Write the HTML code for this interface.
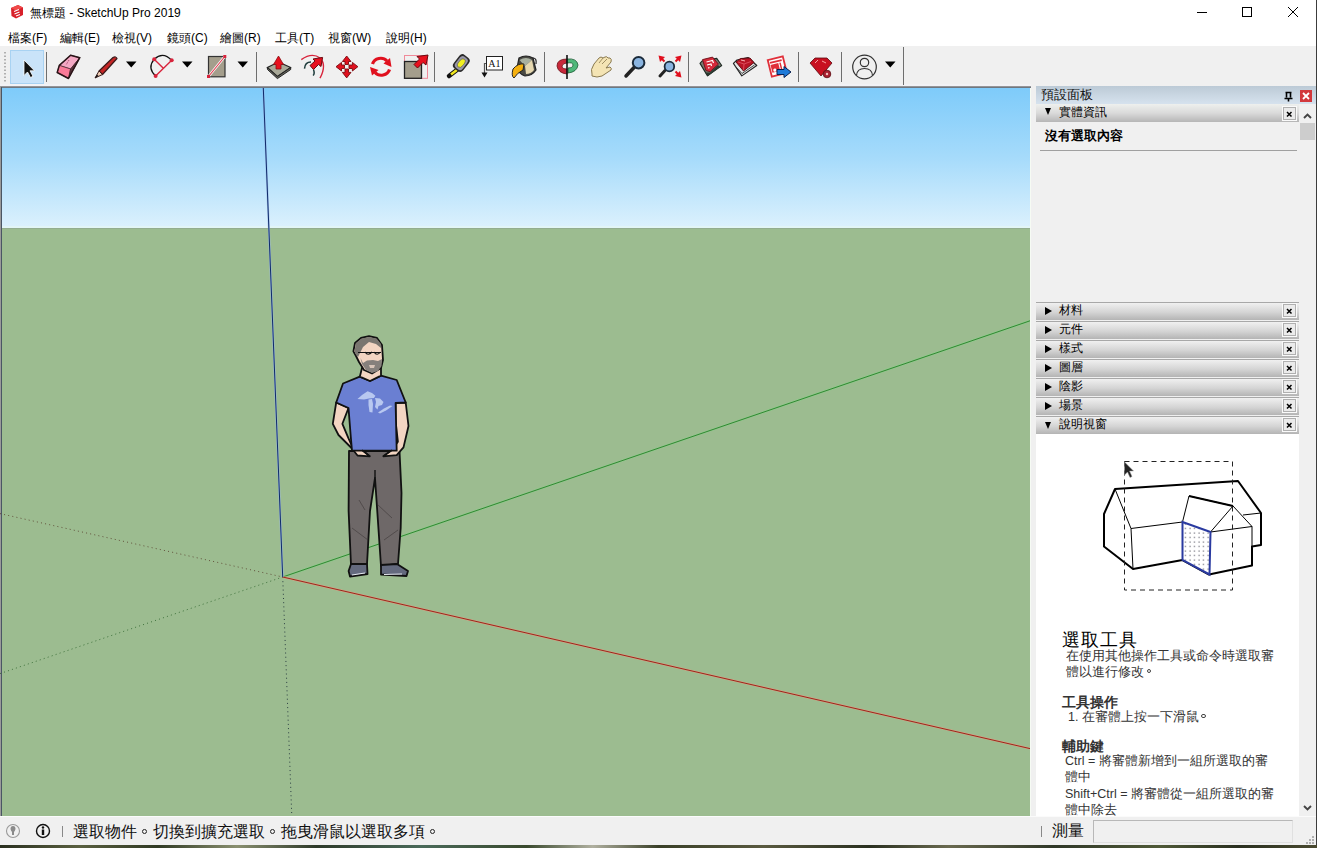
<!DOCTYPE html>
<html><head><meta charset="utf-8">
<style>
*{margin:0;padding:0;box-sizing:border-box}
html,body{width:1317px;height:848px;overflow:hidden;background:#f0f0f0;font-family:"Liberation Sans",sans-serif;position:relative}
.a{position:absolute;white-space:nowrap}
svg{position:absolute;left:0;top:0}
.mi{position:absolute;top:31px;font-size:12px;color:#000;line-height:14px;white-space:nowrap}
.th{position:absolute;left:1036px;width:263px;height:18px;border-top:1px solid #a8a8a8;background:linear-gradient(#f4f4f4,#dcdcdc 45%,#c2c2c2)}
.th .tri{position:absolute;left:8px;top:3px;font-size:10px;line-height:10px;color:#000}
.th .tt{position:absolute;left:22px;top:1px;font-size:12px;line-height:14px;color:#111}
.th .cx{position:absolute;left:247px;top:1px;width:13px;height:13px;border:1px solid #b4b4b4;background:#ececec;outline:1px solid #fff}
.th .cx:after{content:"";position:absolute}
.hp{position:absolute;font-size:12.5px;line-height:16px;color:#333;white-space:nowrap}
.hh{position:absolute;font-size:14px;line-height:16px;color:#333;font-weight:bold;white-space:nowrap}
</style></head><body>
<!-- window chrome -->
<div class="a" style="left:0;top:0;width:1317px;height:46px;background:#fff"></div>
<div class="a" style="left:1316px;top:0;width:1px;height:845px;background:#3c3c3c"></div>
<!-- viewport -->
<svg width="1317" height="848" viewBox="0 0 1317 848">
<defs>
<linearGradient id="sky" x1="0" y1="0" x2="0" y2="1">
<stop offset="0" stop-color="#7ecbfa"/><stop offset="0.5" stop-color="#a6dbfb"/><stop offset="1" stop-color="#dcf1fd"/>
</linearGradient>
<linearGradient id="tbb" x1="0" y1="0" x2="0" y2="1">
<stop offset="0" stop-color="#a8a4a4"/><stop offset="1" stop-color="#5c6874"/>
</linearGradient>
</defs>
<rect x="0" y="84" width="1031" height="2" fill="#f2f2f5"/>
<rect x="0" y="86" width="1031" height="2" fill="url(#tbb)"/>
<rect x="0" y="88" width="1031" height="140" fill="url(#sky)"/>
<rect x="0" y="226" width="1031" height="2" fill="#e2f5f6"/>
<rect x="0" y="228" width="1031" height="588" fill="#9cbc90"/>
<rect x="0" y="228" width="1031" height="1" fill="#93ad8f"/>
<rect x="0" y="86" width="1" height="731" fill="#9a9a9a"/><rect x="1" y="87" width="1" height="729" fill="#4a5664"/>
<rect x="1030" y="88" width="1" height="728" fill="#a0a8a0"/>
<!-- axes dotted -->
<line x1="0" y1="513.6" x2="282.7" y2="577" stroke="#503020" stroke-width="1" stroke-dasharray="1 3.2" opacity="0.75"/>
<line x1="0" y1="673.6" x2="282.7" y2="577" stroke="#205a20" stroke-width="1" stroke-dasharray="1 3.2" opacity="0.75"/>
<line x1="282.7" y1="577" x2="291.8" y2="816" stroke="#102030" stroke-width="1" stroke-dasharray="1 3.2" opacity="0.8"/>
<!-- axes solid -->
<line x1="282.7" y1="577" x2="1030" y2="320.8" stroke="#86d486" stroke-width="2" opacity="0.8"/>
<line x1="282.7" y1="577" x2="1030" y2="320.8" stroke="#2a7a2a" stroke-width="0.9"/>
<line x1="282.7" y1="577" x2="1030" y2="748.6" stroke="#e89a80" stroke-width="2" opacity="0.8"/>
<line x1="282.7" y1="577" x2="1030" y2="748.6" stroke="#901a10" stroke-width="0.9"/>
<line x1="263.3" y1="88" x2="282.7" y2="577" stroke="#9ab8e8" stroke-width="2" opacity="0.8"/>
<line x1="263.3" y1="88" x2="282.7" y2="577" stroke="#0e2a6a" stroke-width="1"/>
<!-- figure -->
<g stroke="#111" stroke-width="1.8" stroke-linejoin="round" stroke-linecap="round">
<!-- pants -->
<path d="M349,451 L399.5,451 L401.5,493 L400.7,528 L398,564 L381,566 L375,478 L370,511 L367,564 L351,565 L348.6,511 Z" fill="#6e6868"/>
<path d="M351,564 L367,564 L367.5,574 L350,576.5 L348.6,571 Z" fill="#646a7e"/>
<path d="M381,565 L397,564 L408,571 L406.5,576 L381,574.5 Z" fill="#646a7e"/>
<!-- arms -->
<path d="M336.2,402.5 L332.8,423.8 L338.5,435 L352,448.5 L357.5,455.5 L369.8,456.3 L362,450 L352,446 L348.5,438.4 L342.4,423.8 L348.5,408 Z" fill="#f3d5c2"/>
<path d="M405.7,402.5 L408.5,426 L403.5,447.4 L396.7,455.2 L383.3,456.3 L392,450 L397.9,441.7 L395.6,421.6 L395.6,403 Z" fill="#f3d5c2"/>
<!-- shirt -->
<path d="M359.8,376.7 L370,381 L381,375.6 L396.7,380 L405.7,402.5 L395.6,403 L396.7,450.7 L352,450.7 L350.8,437 L348.5,408 L336.2,402.5 L343,383.5 Z" fill="#6a7fd2"/>
<!-- neck -->
<path d="M362,368 L381,368 L381,375.6 L370,381 L359.8,376.7 Z" fill="#f3d5c2"/>
</g>
<!-- head -->
<path d="M356,356 L353.4,351.4 L355,343 L361,338 L369,336.2 L377,338 L382,345 L383,360 L381,368 L372,373.5 L364,370 L359,362 Z" fill="#f3d5c2" stroke="#111" stroke-width="1.8" stroke-linejoin="round"/>
<path d="M354.5,351 L356,343 L361.5,338.5 L369,337 L376.5,338.5 L381,344 L381,348 L376,344 L369,342 L363,347 L360,353 L358,357 L355.5,354 Z" fill="#7a7670"/>
<path d="M360.5,358 L363,363 L367,360.5 L373,360 L378,361 L382,359 L381.5,366 L378,371 L372,373 L366,370 L362,364 Z" fill="#86807c"/>
<path d="M369,365 L375,365 L374,368 L370,368 Z" fill="#d8c4b8"/>
<path d="M358,352.5 H381 M365,352 Q368,356.5 372,352 M374,352 Q377,356.5 380.5,352" stroke="#111" stroke-width="1.2" fill="none"/>
<!-- lakes logo -->
<g fill="#b8c8f0">
<path d="M357.5,399 L362,395 L367.6,391.3 L372,393 L375.4,395.8 L374,398 L369,398.5 L364,399.5 Z"/>
<path d="M368.5,399.5 L372,399 L373,404 L372.5,412.6 L369.5,412 L368.5,405 Z"/>
<path d="M375,398 L380,398.5 L383.5,402 L382,405 L378.5,406 L377.5,409.5 L375,407 L376,402 Z"/>
<path d="M378,412.5 L384,408.5 L390,405.5 L392.5,406 L386,410.5 L380,413.5 Z"/>
</g>
<!-- pockets & creases -->
<path d="M369.8,456.3 L362,450 M383.3,456.3 L392,450" stroke="#111" stroke-width="1.4"/>
<path d="M375,478 L375,470" stroke="#111" stroke-width="1.4"/>
<path d="M359,500 L365,510 M352,528 L368,540 M378,505 L392,518 M384,540 L398,530" stroke="#3a3434" stroke-width="0.9" opacity="0.6"/>
<path d="M384,574.5 L402,574 M352,575 L365,573" stroke="#e4e8f0" stroke-width="1.2"/>
</svg>
<!-- panel -->
<div class="a" style="left:1030px;top:88px;width:1px;height:728px;background:#f6fbf4"></div>
<div class="a" style="left:1036px;top:86px;width:280px;height:18px;background:linear-gradient(#bccad6,#d6e2ee)"></div>
<div class="a" style="left:1041px;top:88px;font-size:12.8px;line-height:14px;color:#111">預設面板</div>
<svg width="1317" height="848" style="pointer-events:none">
<path d="M1285.5,92.5 h6 M1286.5,92.5 v5 M1290.5,92.5 v5 M1284.5,98.5 h8 M1288.5,98.5 v3" stroke="#000" stroke-width="1.6" fill="none"/>
<rect x="1300" y="90" width="12" height="12" fill="#d2383c"/>
<path d="M1303,93 L1309,99 M1309,93 L1303,99" stroke="#fff" stroke-width="1.8"/>
</svg>
<div class="a" style="left:1036px;top:104px;width:263px;height:18px;background:linear-gradient(#eef0ee,#dadada 50%,#b6b6b6)">
 <div class="a" style="left:9px;top:4px;width:0;height:0;border-left:3.5px solid transparent;border-right:3.5px solid transparent;border-top:7px solid #000"></div>
 <div class="a" style="left:23px;top:1px;font-size:12px;line-height:14px;color:#000">實體資訊</div>
 <div class="a" style="left:247px;top:3px;width:13px;height:13px;border:1px solid #b0b0b0;background:#ebebeb;outline:1px solid #fafafa"><svg width="13" height="13" style="left:-1px;top:-1px"><path d="M4,5 L8.5,9.5 M8.5,5 L4,9.5" stroke="#000" stroke-width="1.5"/></svg></div>
</div>
<div class="a" style="left:1045px;top:128px;font-size:12.5px;line-height:16px;font-weight:bold;color:#000">沒有選取內容</div>
<div class="a" style="left:1040px;top:150px;width:257px;height:1px;background:#a0a0a0"></div>
<!-- scrollbar top -->
<svg width="1317" height="848" style="pointer-events:none">
<path d="M1304,118 L1307.5,114.5 L1311,118" stroke="#444" stroke-width="1.9" fill="none"/>
<rect x="1300" y="123" width="15" height="17" fill="#cdcdcd"/>
<path d="M1304,806 L1307.5,809.5 L1311,806" stroke="#444" stroke-width="1.9" fill="none"/>
</svg>
<div class="a" style="left:1036px;top:302px;width:263px;height:18px;border-top:1px solid #a8a8a8;background:linear-gradient(#f0f0f0,#d4d4d4 55%,#b4b4b4)">
 <div class="a" style="left:9px;top:4px;width:0;height:0;border-top:4px solid transparent;border-bottom:4px solid transparent;border-left:7px solid #000"></div>
 <div class="a" style="left:23px;top:0px;font-size:12px;line-height:14px;color:#000">材料</div>
 <div class="a" style="left:247px;top:1px;width:13px;height:13px;border:1px solid #b0b0b0;background:#ebebeb;outline:1px solid #fafafa"><svg width="13" height="13" style="left:-1px;top:-1px"><path d="M4,5 L8.5,9.5 M8.5,5 L4,9.5" stroke="#000" stroke-width="1.5"/></svg></div>
</div>
<div class="a" style="left:1036px;top:321px;width:263px;height:18px;border-top:1px solid #a8a8a8;background:linear-gradient(#f0f0f0,#d4d4d4 55%,#b4b4b4)">
 <div class="a" style="left:9px;top:4px;width:0;height:0;border-top:4px solid transparent;border-bottom:4px solid transparent;border-left:7px solid #000"></div>
 <div class="a" style="left:23px;top:0px;font-size:12px;line-height:14px;color:#000">元件</div>
 <div class="a" style="left:247px;top:1px;width:13px;height:13px;border:1px solid #b0b0b0;background:#ebebeb;outline:1px solid #fafafa"><svg width="13" height="13" style="left:-1px;top:-1px"><path d="M4,5 L8.5,9.5 M8.5,5 L4,9.5" stroke="#000" stroke-width="1.5"/></svg></div>
</div>
<div class="a" style="left:1036px;top:340px;width:263px;height:18px;border-top:1px solid #a8a8a8;background:linear-gradient(#f0f0f0,#d4d4d4 55%,#b4b4b4)">
 <div class="a" style="left:9px;top:4px;width:0;height:0;border-top:4px solid transparent;border-bottom:4px solid transparent;border-left:7px solid #000"></div>
 <div class="a" style="left:23px;top:0px;font-size:12px;line-height:14px;color:#000">樣式</div>
 <div class="a" style="left:247px;top:1px;width:13px;height:13px;border:1px solid #b0b0b0;background:#ebebeb;outline:1px solid #fafafa"><svg width="13" height="13" style="left:-1px;top:-1px"><path d="M4,5 L8.5,9.5 M8.5,5 L4,9.5" stroke="#000" stroke-width="1.5"/></svg></div>
</div>
<div class="a" style="left:1036px;top:359px;width:263px;height:18px;border-top:1px solid #a8a8a8;background:linear-gradient(#f0f0f0,#d4d4d4 55%,#b4b4b4)">
 <div class="a" style="left:9px;top:4px;width:0;height:0;border-top:4px solid transparent;border-bottom:4px solid transparent;border-left:7px solid #000"></div>
 <div class="a" style="left:23px;top:0px;font-size:12px;line-height:14px;color:#000">圖層</div>
 <div class="a" style="left:247px;top:1px;width:13px;height:13px;border:1px solid #b0b0b0;background:#ebebeb;outline:1px solid #fafafa"><svg width="13" height="13" style="left:-1px;top:-1px"><path d="M4,5 L8.5,9.5 M8.5,5 L4,9.5" stroke="#000" stroke-width="1.5"/></svg></div>
</div>
<div class="a" style="left:1036px;top:378px;width:263px;height:18px;border-top:1px solid #a8a8a8;background:linear-gradient(#f0f0f0,#d4d4d4 55%,#b4b4b4)">
 <div class="a" style="left:9px;top:4px;width:0;height:0;border-top:4px solid transparent;border-bottom:4px solid transparent;border-left:7px solid #000"></div>
 <div class="a" style="left:23px;top:0px;font-size:12px;line-height:14px;color:#000">陰影</div>
 <div class="a" style="left:247px;top:1px;width:13px;height:13px;border:1px solid #b0b0b0;background:#ebebeb;outline:1px solid #fafafa"><svg width="13" height="13" style="left:-1px;top:-1px"><path d="M4,5 L8.5,9.5 M8.5,5 L4,9.5" stroke="#000" stroke-width="1.5"/></svg></div>
</div>
<div class="a" style="left:1036px;top:397px;width:263px;height:18px;border-top:1px solid #a8a8a8;background:linear-gradient(#f0f0f0,#d4d4d4 55%,#b4b4b4)">
 <div class="a" style="left:9px;top:4px;width:0;height:0;border-top:4px solid transparent;border-bottom:4px solid transparent;border-left:7px solid #000"></div>
 <div class="a" style="left:23px;top:0px;font-size:12px;line-height:14px;color:#000">場景</div>
 <div class="a" style="left:247px;top:1px;width:13px;height:13px;border:1px solid #b0b0b0;background:#ebebeb;outline:1px solid #fafafa"><svg width="13" height="13" style="left:-1px;top:-1px"><path d="M4,5 L8.5,9.5 M8.5,5 L4,9.5" stroke="#000" stroke-width="1.5"/></svg></div>
</div>
<div class="a" style="left:1036px;top:416px;width:263px;height:18px;border-top:1px solid #a8a8a8;background:linear-gradient(#f0f0f0,#d4d4d4 55%,#b4b4b4)">
 <div class="a" style="left:9px;top:5px;width:0;height:0;border-left:3.5px solid transparent;border-right:3.5px solid transparent;border-top:7px solid #000"></div>
 <div class="a" style="left:23px;top:0px;font-size:12px;line-height:14px;color:#000">說明視窗</div>
 <div class="a" style="left:247px;top:1px;width:13px;height:13px;border:1px solid #b0b0b0;background:#ebebeb;outline:1px solid #fafafa"><svg width="13" height="13" style="left:-1px;top:-1px"><path d="M4,5 L8.5,9.5 M8.5,5 L4,9.5" stroke="#000" stroke-width="1.5"/></svg></div>
</div><div class="a" style="left:1036px;top:434px;width:263px;height:383px;background:#fff"></div>
<svg width="1317" height="848" style="pointer-events:none">
<g fill="none" stroke="#000" stroke-linejoin="round">
<path d="M1115,489 L1238,481 L1261,513 L1261,545 L1252,546.5 L1252,565.5 L1209,574.5 L1182.5,560 L1133,569 L1124,562 L1104,546.5 L1104,514 Z" stroke-width="2" fill="#fff"/>
<path d="M1115,489 L1131,528.5 L1133,569 M1131,528.5 L1182.5,522 L1189,496 L1233,506 L1252,526.5 L1252,546.5 M1233,506 L1210.5,532 L1252,526.5 M1243,515 L1261,513" stroke-width="1"/>
<path d="M1189,496 L1233,506" stroke-width="2"/>
</g>
<defs><pattern id="dots" width="4.5" height="4.5" patternUnits="userSpaceOnUse"><rect width="4.5" height="4.5" fill="#fff"/><rect x="1.5" y="1.5" width="1" height="1" fill="#223"/></pattern></defs>
<path d="M1182.5,522 L1210.5,532 L1209.5,574.5 L1182.5,560 Z" fill="url(#dots)" stroke="#2a3aa0" stroke-width="2"/>
<rect x="1124.5" y="461.5" width="108" height="128.5" fill="none" stroke="#222" stroke-width="1" stroke-dasharray="5 4"/>

<path d="M1124.5,462 L1124.5,475 L1127.5,472 L1130,477.5 L1132,476.5 L1129.5,471 L1133.5,471 Z" fill="#222" stroke="#999" stroke-width="0.5"/>
</svg>
<div class="a" style="left:1062px;top:630px;font-family:'Liberation Serif',serif;font-size:18px;line-height:20px;letter-spacing:1px;color:#000">選取工具</div>
<div class="hp" style="left:1066px;top:648px">在使用其他操作工具或命令時選取審</div>
<div class="hp" style="left:1066px;top:664px">體以進行修改<span style="display:inline-block;width:1em;height:1em;position:relative;vertical-align:-0.1em"><i style="position:absolute;left:0.2em;top:0.3em;width:0.35em;height:0.35em;border:1px solid #444;border-radius:50%"></i></span></div>
<div class="hh" style="left:1062px;top:694px">工具操作</div>
<div class="hp" style="left:1068px;top:709px">1. 在審體上按一下滑鼠<span style="display:inline-block;width:1em;height:1em;position:relative;vertical-align:-0.1em"><i style="position:absolute;left:0.2em;top:0.3em;width:0.35em;height:0.35em;border:1px solid #444;border-radius:50%"></i></span></div>
<div class="hh" style="left:1062px;top:738px">輔助鍵</div>
<div class="hp" style="left:1065px;top:753px">Ctrl = 將審體新增到一組所選取的審</div>
<div class="hp" style="left:1065px;top:769px">體中</div>
<div class="hp" style="left:1065px;top:786px">Shift+Ctrl = 將審體從一組所選取的審</div>
<div class="hp" style="left:1065px;top:802px">體中除去</div>
<!-- title/menu -->
<svg width="1317" height="848" style="pointer-events:none">
<g transform="translate(10,5)">
<path d="M1,3 L8,0 L13,2.5 L13,10 L6,13.5 L1.5,11 Z" fill="#d8202a"/>
<path d="M1,3 L8,0 L13,2.5 L6,5.5 Z" fill="#f04a4a"/>
<path d="M4,6.5 L9,4.5 M4.5,9 L9.5,7 M6,11 L10,9.5" stroke="#fff" stroke-width="1.1"/>
</g>
<path d="M1197,12.5 H1207" stroke="#000" stroke-width="1"/>
<rect x="1242.5" y="7.5" width="9" height="9" fill="none" stroke="#000" stroke-width="1"/>
<path d="M1288,7 L1298,17 M1298,7 L1288,17" stroke="#000" stroke-width="1"/>
</svg>
<div class="a" style="left:30px;top:5px;font-size:12px;line-height:16px;color:#000">無標題 - SketchUp Pro 2019</div>
<div class="mi" style="left:8px">檔案(F)</div>
<div class="mi" style="left:60px">編輯(E)</div>
<div class="mi" style="left:112px">檢視(V)</div>
<div class="mi" style="left:167px">鏡頭(C)</div>
<div class="mi" style="left:220px">繪圖(R)</div>
<div class="mi" style="left:275px">工具(T)</div>
<div class="mi" style="left:328px">視窗(W)</div>
<div class="mi" style="left:386px">說明(H)</div>
<!-- toolbar -->
<svg width="1317" height="848" style="pointer-events:none">
<path d="M5,52 V83" stroke="#9a9a9a" stroke-width="1.5" stroke-dasharray="1.5 2"/>
<rect x="10.5" y="50.5" width="33" height="33" fill="#c9e3f9" stroke="#a8d2f2"/>
<g stroke="#6e6e6e" stroke-width="1">
<path d="M46.5,52 V82 M256.5,52 V82 M434.5,52 V82 M544.5,52 V82 M688.5,52 V82 M798.5,52 V82 M841.5,52 V82 M903.5,47 V85"/>
</g>
<!-- select -->
<path d="M24,60 L24,75.5 L27.5,72 L30.5,77.5 L33,76.3 L30,70.8 L34.5,70.8 Z" fill="#111" stroke="#fff" stroke-width="0.8"/>
<!-- eraser -->
<g stroke="#2a1418" stroke-linejoin="round">
<path d="M70.6,55.2 L79.8,57.7 L70.6,69 L59.3,65.4 Z" fill="#f4a8c4" stroke-width="0.6"/>
<path d="M59.3,65.4 L70.6,69 L68.5,78.5 L57.2,72.5 Z" fill="#fa7a98" stroke-width="0.6"/>
<path d="M79.8,57.7 L68.5,78.5 L70.6,69 Z" fill="#5a3038" stroke-width="0.6"/>
<path d="M70.6,55.2 L79.8,57.7 L68.5,78.5 L57.2,72.5 L59.3,65.4 Z" fill="none" stroke-width="1.5"/>
</g>
<path d="M69,60 L66,65" stroke="#9a4060" stroke-width="1" stroke-dasharray="1 1"/>
<!-- pencil -->
<path d="M99,71 L113,57.5 Q116,56 117,58.5 L102.5,74.5 Z" fill="#c42626" stroke="#3a1a1a" stroke-width="1.2" stroke-linejoin="round"/>
<path d="M99,71 L102.5,74.5 L95,78 Z" fill="#f2cfb4" stroke="#3a1a1a" stroke-width="1"/>
<path d="M95,78 L97,74.5 L98.5,76 Z" fill="#111"/>
<path d="M126,61.5 H136.5 L131.25,67.5 Z M182,61.5 H192.5 L187.25,67.5 Z M237.5,61.5 H248 L242.75,67.5 Z M885,61.5 H895.5 L890.25,67.5 Z" fill="#000"/>
<!-- arc -->
<path d="M154.2,59.2 Q163,51 171.7,60.3 M154.2,59.2 Q147,68 155.6,76" stroke="#111" stroke-width="1.3" fill="none"/>
<path d="M171.7,60.3 L155.6,76 M154.2,59.2 L163.1,68.1" stroke="#d8243c" stroke-width="1.4"/>
<g fill="#d8243c"><circle cx="154.2" cy="59.2" r="2"/><circle cx="171.7" cy="60.3" r="2"/><circle cx="155.6" cy="76" r="2"/></g>
<!-- rectangle -->
<rect x="208.5" y="56.5" width="16.5" height="20.3" fill="#a49e8c" stroke="#333" stroke-width="1.2"/>
<path d="M208.5,76.5 L224.8,56.5" stroke="#fff" stroke-width="2.6"/>
<path d="M208.5,76.5 L224.8,56.5" stroke="#e23a50" stroke-width="1.1"/>
<rect x="207" y="75" width="3" height="3" fill="#d8243c"/><rect x="223.3" y="55" width="3" height="3" fill="#d8243c"/>
<!-- push pull -->
<path d="M267.3,67.5 L278.5,62 L290.7,67.5 L277.4,76.6 Z" fill="#a8a898" stroke="#222" stroke-width="1.3" stroke-linejoin="round"/>
<path d="M267.3,67.5 L267.5,69.5 L277.4,78.6 L290.7,69.5 L290.7,67.5 L277.4,76.6 Z" fill="#6a6a60" stroke="#222" stroke-width="1" stroke-linejoin="round"/>
<path d="M278.5,56 L283.5,64.5 L281,64.5 L281,69 L276,69 L276,64.5 L273.5,64.5 Z" fill="#e8101e" stroke="#8a0a10" stroke-width="0.8"/>
<!-- follow me -->
<path d="M301.3,59.6 Q312,52 320,58 Q327,65 320,78.2" stroke="#d8243c" stroke-width="1.4" fill="none"/>
<path d="M304.5,68.6 Q305,62 311,62 M313.5,69.5 Q315,74 313,75.5" stroke="#1e3c3c" stroke-width="1.5" fill="none"/>
<path d="M322.6,57.4 L321,66.5 L318.5,64.5 L313.5,69.5 L310,65.5 L315,61 L313,59 Z" fill="#e8101e" stroke="#6a0a10" stroke-width="1" stroke-linejoin="round"/>
<!-- move -->
<g fill="#e0101e" stroke="#7a0a10" stroke-width="0.9" stroke-linejoin="round">
<path d="M346.7,56 L351,61.5 L348.5,61.5 L348.5,64.5 L345,64.5 L345,61.5 L342.4,61.5 Z"/>
<path d="M346.7,77.9 L351,72.4 L348.5,72.4 L348.5,69 L345,69 L345,72.4 L342.4,72.4 Z"/>
<path d="M336,66.7 L341.5,62.4 L341.5,65 L344.5,65 L344.5,68.5 L341.5,68.5 L341.5,71 Z"/>
<path d="M357.9,66.7 L352.4,62.4 L352.4,65 L349,65 L349,68.5 L352.4,68.5 L352.4,71 Z"/>
</g>
<!-- rotate -->
<path d="M372.5,64 A8.5,8 0 0 1 387,61" stroke="#e0101e" stroke-width="3.2" fill="none"/>
<path d="M391.5,67 L383.5,63.5 L390,58 Z" fill="#e0101e"/>
<path d="M389.5,69.5 A8.5,8 0 0 1 375,72.5" stroke="#e0101e" stroke-width="3.2" fill="none"/>
<path d="M370,67 L378.5,70 L372,75.5 Z" fill="#e0101e"/>
<!-- scale -->
<rect x="404.5" y="55.5" width="23" height="22.8" fill="none" stroke="#f08a9a" stroke-width="1"/>
<rect x="404.5" y="61.5" width="17" height="16.8" fill="#a49e8c" stroke="#222" stroke-width="1.3"/>
<path d="M428,55 L426,65 L423,62.5 L417.5,68 L414,64.5 L419.5,59 L417,56.5 Z" fill="#e8101e" stroke="#6a0a10" stroke-width="1" stroke-linejoin="round"/>
<!-- tape -->
<path d="M457.5,69.5 L449,76" stroke="#111" stroke-width="4.5" stroke-linecap="round"/>
<path d="M457.5,69.5 L451,74.5" stroke="#f2ea20" stroke-width="2.5"/>
<g transform="translate(461,63.5) rotate(38)"><rect x="-6" y="-9" width="12" height="17" rx="4" fill="#2a2a2a"/><rect x="-4.5" y="-7.5" width="9" height="14" rx="3.5" fill="#9a98a8"/><ellipse cx="0" cy="-0.5" rx="2.8" ry="5" fill="#f2f020" stroke="#555" stroke-width="0.6"/></g>
<!-- text -->
<rect x="486.5" y="56.5" width="16" height="13.5" fill="#fff" stroke="#222" stroke-width="1"/>
<text x="488.3" y="67" font-family="Liberation Serif" font-size="10" fill="#111">A1</text>
<path d="M486,63.5 H484.5 V73" stroke="#555" stroke-width="1.2" fill="none"/>
<path d="M481.5,72.5 L487.5,72.5 L484.5,77.5 Z" fill="#111"/>
<!-- paint -->
<path d="M519,58 Q526,54 533,58 L536,70 Q532,76 525,76 Q519,74 517,68 Z" fill="#4a4a44" stroke="#222" stroke-width="1.2"/>
<path d="M519.5,60 Q526,56 532,60 L525,66 Z" fill="#a8b0a0"/>
<path d="M525,66 L532,60 L534,70 Q531,74 526,74 Z" fill="#e6d8b0"/>
<path d="M533,58 Q537,58 536,64" stroke="#222" stroke-width="1.2" fill="none"/>
<path d="M524,64 Q518,63 513,69 Q511,76 514,78 Q517,73 523,70 Z" fill="#f4b010" stroke="#222" stroke-width="1"/>
<!-- orbit -->
<path d="M567,59 Q557,59 557,66 Q558,73 567,74 L567,69 Q562,69 562,66 Q563,63 567,63 Z" fill="#c8283a" stroke="#6a1018" stroke-width="0.8"/>
<path d="M567,59 Q577,58 578,65 Q577,72 568,73 L568,68 Q573,68 573,65 Q573,62 567,63 Z" fill="#50b87a" stroke="#1a5a34" stroke-width="0.8"/>
<path d="M567,55 V79" stroke="#111" stroke-width="1.6"/>
<!-- pan -->
<path d="M592,74 Q590,70 594,64 L599,58 Q601,56 603,58 L605,57 Q607,56 608,58 L610,58 Q612,59 611,62 L606,68 L610,67 Q612,68 611,70 L602,76 Q597,78 592,76 Z" fill="#f4e4b4" stroke="#8a7a50" stroke-width="1"/>
<path d="M599,63 L603,58 M602,64 L607,59" stroke="#8a7a50" stroke-width="0.8"/>
<!-- zoom -->
<path d="M634,67.5 L626,76" stroke="#222" stroke-width="3.5" stroke-linecap="round"/>
<circle cx="638.6" cy="62.7" r="5.8" fill="#8ab4e0" stroke="#1a2a3a" stroke-width="2"/>
<!-- zoom extents -->
<path d="M665,70.5 L660,76" stroke="#222" stroke-width="3" stroke-linecap="round"/>
<circle cx="669.4" cy="66.5" r="4.8" fill="#8ab4e0" stroke="#1a2a3a" stroke-width="1.8"/>
<g fill="#e0101e"><path d="M658.5,55.5 L665,57 L660,62 Z"/><path d="M681.5,55.5 L675,57 L680,62 Z"/><path d="M681.5,77.5 L675,76 L680,71 Z"/></g>
<path d="M661,58 L664.5,61.5 M679,58 L675.5,61.5 M679,75 L675.5,71.5" stroke="#e0101e" stroke-width="2"/>
<!-- 3d warehouse -->
<path d="M700,63.4 L707.5,75.9 L721.7,65.5 L716.7,58.4 L702,61 Z" fill="#7a7a70" stroke="#1e2a24" stroke-width="1.1" stroke-linejoin="round"/>
<path d="M702.5,59.6 L712.6,57.1 L718.4,64.2 L710,71.7 L705.9,70.5 Z" fill="#d42a3a" stroke="#6a1018" stroke-width="0.9" stroke-linejoin="round"/>
<path d="M705,72.5 L708,76 L720,67 L718,65 L710,72.5 Z" fill="#2a3a30"/>
<path d="M706.5,62 L712.5,60.5 L713.5,63 M707,65 L711,64 L711.5,66 M708,68 L709.5,67.6" stroke="#fff" stroke-width="1.2" fill="none"/>
<!-- extension warehouse -->
<path d="M733.4,63.4 L741.8,75.9 L756.8,65.5 L748,57.5 L737,60 Z" fill="#e4e8e8" stroke="#222" stroke-width="1.1" stroke-linejoin="round"/>
<path d="M735,66 L742,73.5 L754.5,65" stroke="#333" stroke-width="0.9" fill="none"/>
<path d="M736,62 L740.5,58.5 L750,58 L754,62.5 L743.5,71 Z" fill="#b81424" stroke="#5a0a10" stroke-width="0.9" stroke-linejoin="round"/>
<path d="M738,62 L744,64 L751,61.5 M744,64 L743.5,70" stroke="#e05060" stroke-width="0.9" fill="none"/>
<path d="M741,60 L745,61" stroke="#f8b0b0" stroke-width="1"/>
<!-- share -->
<g transform="rotate(-14 779 66)"><rect x="769.5" y="57.5" width="15.5" height="17" fill="#fff" stroke="#e0303a" stroke-width="1.8"/><rect x="771" y="60" width="12" height="1.8" fill="#e0303a"/><rect x="771" y="63" width="8" height="8" fill="#e0303a"/><rect x="780" y="63" width="1.5" height="9" fill="#e0303a"/><circle cx="774" cy="69" r="1.6" fill="#fff"/></g>
<path d="M777,69.5 H784 V66.5 L791,72 L784,77.5 V74.5 H777 Z" fill="#1e7ad8" stroke="#0a2050" stroke-width="1" stroke-linejoin="round"/>
<!-- ruby -->
<path d="M810,63 L815,58 L827,58 L832,63 L821,76 Z" fill="#c81020" stroke="#5a0a10" stroke-width="0.8"/>
<path d="M815,63 L818,60 M822,61 L826,63" stroke="#f8a0a0" stroke-width="1"/>
<circle cx="827" cy="74" r="3.8" fill="#a82030" stroke="#5a0a10" stroke-width="0.8"/>
<circle cx="827" cy="74" r="1.2" fill="#f0c0c0"/>
<!-- user -->
<circle cx="864.5" cy="67" r="11.8" fill="none" stroke="#333" stroke-width="1.2"/>
<circle cx="864.5" cy="62.5" r="4.2" fill="none" stroke="#333" stroke-width="1.2"/>
<path d="M856.5,75.5 Q857,68.5 864.5,68.5 Q872,68.5 872.5,75.5" fill="none" stroke="#333" stroke-width="1.2"/>
</svg>
<div class="a" style="left:0;top:816px;width:1316px;height:1px;background:#fbfbfb"></div>
<svg width="1317" height="848" style="pointer-events:none">
<circle cx="13" cy="831" r="6.5" fill="none" stroke="#9a9a9a" stroke-width="1.1"/>
<path d="M13,826 Q10.5,826 10.5,829 Q11,831 12,832 L12,835 H14 L14,832 Q15,831 15.5,829 Q15.5,826 13,826 Z" fill="#8a8a8a"/>
<circle cx="43" cy="831" r="6.5" fill="none" stroke="#111" stroke-width="1.4"/>
<circle cx="43" cy="827.5" r="1.2" fill="#111"/>
<path d="M41.8,829.5 H44.2 V835 H41.8 Z" fill="#111"/>
<path d="M62.5,826 V837" stroke="#888" stroke-width="1"/>
<path d="M1041.5,826 V837" stroke="#888" stroke-width="1"/>
<g fill="#b0b0b0"><rect x="1312" y="836" width="2" height="2"/><rect x="1309" y="839" width="2" height="2"/><rect x="1312" y="839" width="2" height="2"/><rect x="1306" y="842" width="2" height="2"/><rect x="1309" y="842" width="2" height="2"/><rect x="1312" y="842" width="2" height="2"/></g>
</svg>
<div class="a" style="left:73px;top:822px;font-size:16.2px;line-height:18px;color:#111">選取物件<span style="display:inline-block;width:1em;height:1em;position:relative;vertical-align:top"><i style="position:absolute;left:0.3em;top:0.42em;width:0.3em;height:0.3em;border:1.2px solid #222;border-radius:50%"></i></span>切換到擴充選取<span style="display:inline-block;width:1em;height:1em;position:relative;vertical-align:top"><i style="position:absolute;left:0.3em;top:0.42em;width:0.3em;height:0.3em;border:1.2px solid #222;border-radius:50%"></i></span>拖曳滑鼠以選取多項<span style="display:inline-block;width:1em;height:1em;position:relative;vertical-align:top"><i style="position:absolute;left:0.3em;top:0.42em;width:0.3em;height:0.3em;border:1.2px solid #222;border-radius:50%"></i></span></div>
<div class="a" style="left:1052px;top:821px;font-size:16px;line-height:19px;color:#111">測量</div>
<div class="a" style="left:1093px;top:820px;width:200px;height:23px;background:#f0f0f0;border:1px solid #b8b8b8;border-right-color:#e0e0e0;border-bottom-color:#e0e0e0"></div>
<div class="a" style="left:0;top:845px;width:1317px;height:3px;background:linear-gradient(90deg,#2a3020 0%,#5a6040 6%,#303a24 12%,#8a9070 18%,#2e3a2a 24%,#4a6a5a 32%,#3a4a2e 40%,#b0b0a0 45%,#3a4028 50%,#5a5a40 58%,#2a3020 66%,#6a6a50 72%,#303828 80%,#505a38 88%,#2a3020 94%,#4a4a30 100%)"></div>
</body></html>
